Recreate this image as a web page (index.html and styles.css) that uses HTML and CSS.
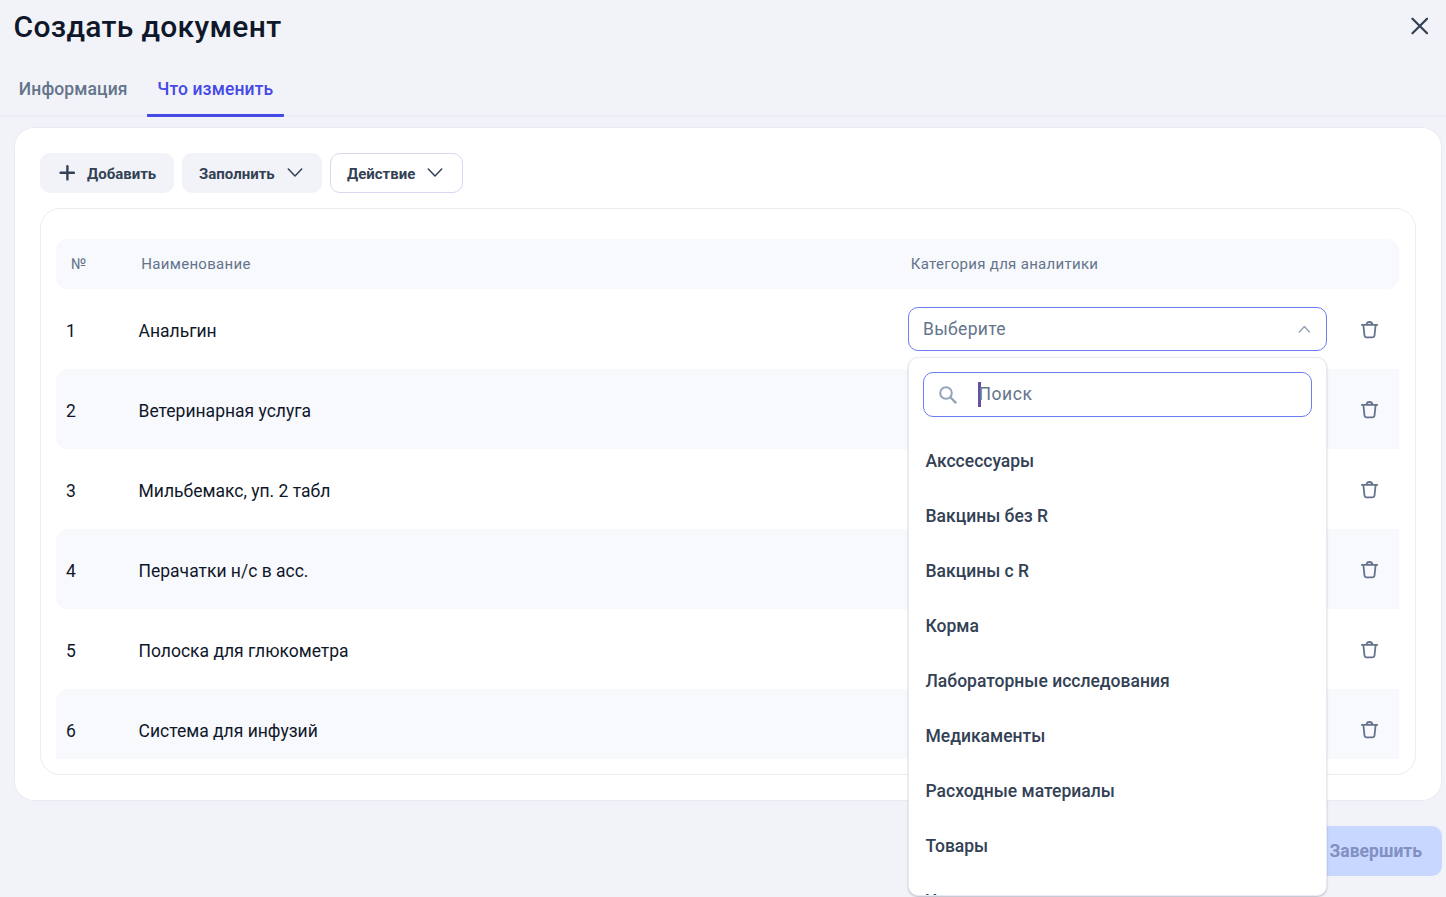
FILE: index.html
```html
<!DOCTYPE html>
<html lang="ru">
<head>
<meta charset="utf-8">
<title>Создать документ</title>
<link rel="stylesheet" href="styles.css">
</head>
<body>
<svg class="sprite" aria-hidden="true">
  <symbol id="trash" viewBox="0 0 19 19"><path d="M1.8 4.9H17.2M3.4 5.1L4.5 15.7Q4.7 17.3 6.2 17.3H12.8Q14.3 17.3 14.5 15.7L15.6 5.1M6.5 4.6Q6.9 2 9.5 2T12.5 4.6" fill="none" stroke="currentColor" stroke-width="1.8" stroke-linecap="round" stroke-linejoin="round"/></symbol>
  <symbol id="chevron" viewBox="0 0 16 10"><path d="M1.3 1L8 8L14.7 1" fill="none" stroke="currentColor" stroke-width="1.5" stroke-linecap="round" stroke-linejoin="round"/></symbol>
</svg>
<header class="header">
  <h1 class="title">Создать документ</h1>
  <svg class="close" viewBox="0 0 18 18"><path d="M1.5 1.5L16.5 16.5M16.5 1.5L1.5 16.5" fill="none" stroke="currentColor" stroke-width="2.3" stroke-linecap="round"/></svg>
</header>
<nav class="tabs">
  <a class="tab tab-info">Информация</a>
  <a class="tab tab-active">Что изменить</a>
</nav>
<main class="card">
  <div class="toolbar">
    <button class="btn btn-add"><svg class="plus" viewBox="0 0 16 16"><path d="M8.4 1.2V14.4M1.6 7.8H15" stroke="currentColor" stroke-width="2.4" stroke-linecap="round"/></svg><span>Добавить</span></button>
    <button class="btn btn-fill"><span>Заполнить</span><svg class="chev"><use href="#chevron"/></svg></button>
    <button class="btn btn-action"><span>Действие</span><svg class="chev"><use href="#chevron"/></svg></button>
  </div>
  <section class="panel">
    <div class="thead"><span>№</span><span>Наименование</span><span>Категория для аналитики</span></div>
    <div class="rows">
      <div class="row"><span class="num">1</span><span class="name">Анальгин</span>
        <div class="select-wrap">
          <div class="select"><span>Выберите</span><svg class="caret" viewBox="0 0 12 8"><path d="M1.4 7L6.4 1.6L11.4 7" fill="none" stroke="currentColor" stroke-width="1.4" stroke-linecap="round" stroke-linejoin="round"/></svg></div>
          <div class="dropdown">
            <div class="search"><svg class="lens" viewBox="0 0 18 18"><circle cx="7" cy="7" r="5.8" fill="none" stroke="currentColor" stroke-width="2"/><path d="M11.3 11.3L17.2 17.2" stroke="currentColor" stroke-width="2.3"/></svg><span class="cursor"></span><span class="placeholder">Поиск</span></div>
            <div class="options">
              <div class="option">Акссессуары</div>
              <div class="option">Вакцины без R</div>
              <div class="option">Вакцины с R</div>
              <div class="option">Корма</div>
              <div class="option">Лабораторные исследования</div>
              <div class="option">Медикаменты</div>
              <div class="option">Расходные материалы</div>
              <div class="option">Товары</div>
              <div class="option">Услуги</div>
            </div>
          </div>
        </div>
        <svg class="trash"><use href="#trash"/></svg></div>
      <div class="row"><span class="num">2</span><span class="name">Ветеринарная услуга</span><span></span><svg class="trash"><use href="#trash"/></svg></div>
      <div class="row"><span class="num">3</span><span class="name">Мильбемакс, уп. 2 табл</span><span></span><svg class="trash"><use href="#trash"/></svg></div>
      <div class="row"><span class="num">4</span><span class="name">Перачатки н/с в асс.</span><span></span><svg class="trash"><use href="#trash"/></svg></div>
      <div class="row"><span class="num">5</span><span class="name">Полоска для глюкометра</span><span></span><svg class="trash"><use href="#trash"/></svg></div>
      <div class="row row-last"><span class="num">6</span><span class="name">Система для инфузий</span><span></span><svg class="trash"><use href="#trash"/></svg></div>
    </div>
  </section>
</main>
<footer class="footer"><button class="finish">Завершить</button></footer>
</body>
</html>
```
FILE: styles.css
```css
* { box-sizing: border-box; }
body {
  margin: 0;
  height: 897px;
  overflow: hidden;
  background: #f2f3f8;
  color: #0f172a;
  font-family: Roboto, "Noto Sans", sans-serif;
  font-size: 17.5px;
}
svg { display: block; flex: none; }
.sprite { position: absolute; width: 0; height: 0; }
.header {
  display: flex;
  align-items: center;
  justify-content: space-between;
  height: 53px;
  padding: 0 18px 0 13.5px;
}
.title { margin: 0; font-size: 30px; font-weight: 500; line-height: 54px; letter-spacing: 0.32px; }
.close { width: 17.5px; height: 18px; margin-bottom: 1px; color: #334155; }
.tabs {
  display: flex;
  height: 64px;
  padding: 0 0 0 8.8px;
  box-shadow: inset 0 -2px #ebecf5;
  letter-spacing: 0.12px;
  white-space: nowrap;
}
.tab { height: 64px; padding: 0 10px; line-height: 72px; font-weight: 500; color: #64748b; }
.tab-info { width: 138.5px; }
.tab-active { width: 136.5px; color: #4549e6; border-bottom: 3px solid #4549e6; border-radius: 1px; }
.card {
  width: 1428px;
  height: 674px;
  margin: 10px 0 0 14px;
  padding: 25px;
  border: 1px solid #e9eaf4;
  border-radius: 20px;
  background: #fff;
}
.toolbar { display: flex; gap: 8px; }
.btn {
  display: flex;
  align-items: center;
  height: 40px;
  padding: 0 17px;
  border: 0;
  border-radius: 10px;
  background: #f2f3f8;
  color: #334155;
  font: 700 15px/40px Roboto, sans-serif;
}
.btn span { padding-top: 2px; line-height: 38px; }
.btn-add { width: 134px; padding-left: 19px; gap: 12px; }
.btn-fill { width: 140px; justify-content: space-between; padding-right: 19px; }
.btn-action { width: 133px; justify-content: space-between; padding: 0 19px 0 16px; border: 1px solid #d5d8ee; background: #fff; }
.plus { width: 16px; height: 16px; }
.chev { width: 16px; height: 10px; }
.panel {
  height: 567px;
  margin-top: 15px;
  padding: 30px 16px 15px 15px;
  border: 1px solid #ebecf2;
  border-radius: 20px;
}
.row { display: grid; grid-template-columns: 82.5px 769.5px 419px 72px; align-items: center; }
.thead {
  display: grid;
  align-items: center;
  grid-template-columns: 70.3px 769.5px 1fr;
  height: 50px;
  padding-left: 15px;
  border-radius: 12px;
  background: #f8f9fd;
  color: #64748b;
  font-size: 15px;
  letter-spacing: 0.3px;
}
.row { height: 80px; border-radius: 12px 0 0 12px; }
.row:nth-child(even) { background: #f8f9fd; }
.row-last { height: 70px; border-bottom-left-radius: 0; align-items: start; }
.num { padding-left: 10px; }
.num, .name { line-height: 80px; padding-top: 2px; }
.row .num, .row .name { align-self: start; height: 70px; }
.trash { width: 19px; height: 19px; align-self: start; margin: 31px 0 0 33px; color: #64748b; }
.select-wrap { position: relative; align-self: start; margin-top: 18px; }
.select {
  display: flex;
  align-items: center;
  justify-content: space-between;
  height: 44px;
  padding: 0 16px 0 14px;
  border: 1px solid #6c7df5;
  border-radius: 10px;
  background: #fff;
  color: #64748b;
  letter-spacing: 0.3px;
}
.caret { width: 12px; height: 8px; color: #94a3b8; }
.dropdown {
  position: absolute;
  z-index: 2;
  top: 50px;
  left: 0;
  width: 419px;
  height: 539px;
  padding: 14px;
  overflow: hidden;
  border: 1px solid #e9eaf4;
  border-radius: 10px;
  background: #fff;
  box-shadow: 0 1px 2px rgba(15, 23, 42, 0.25);
}
.search {
  display: flex;
  align-items: center;
  height: 44.5px;
  padding-left: 15px;
  border: 1px solid #6c7df5;
  border-radius: 10px;
  color: #64748b;
}
.lens { width: 18px; height: 18px; margin-top: 1px; color: #94a3b8; }
.cursor { width: 3px; height: 25px; margin-left: 21px; background: #674ea7; }
.placeholder { margin: 0 0 1px -2.5px; letter-spacing: 0.55px; }
.options { height: 478.5px; margin: 0 -14px; padding-top: 17.5px; overflow: hidden; }
.option { height: 55px; padding-left: 16.5px; line-height: 55px; font-weight: 500; color: #334155; }
.footer { display: flex; justify-content: flex-end; padding: 25px 4px 0 0; }
.finish {
  width: 134px;
  height: 50px;
  padding: 0 20px 0 0;
  border: 0;
  border-radius: 10px;
  background: #c8d7ff;
  color: #828fc2;
  font: 700 17.5px/50px Roboto, sans-serif;
  text-align: right;
}
```
